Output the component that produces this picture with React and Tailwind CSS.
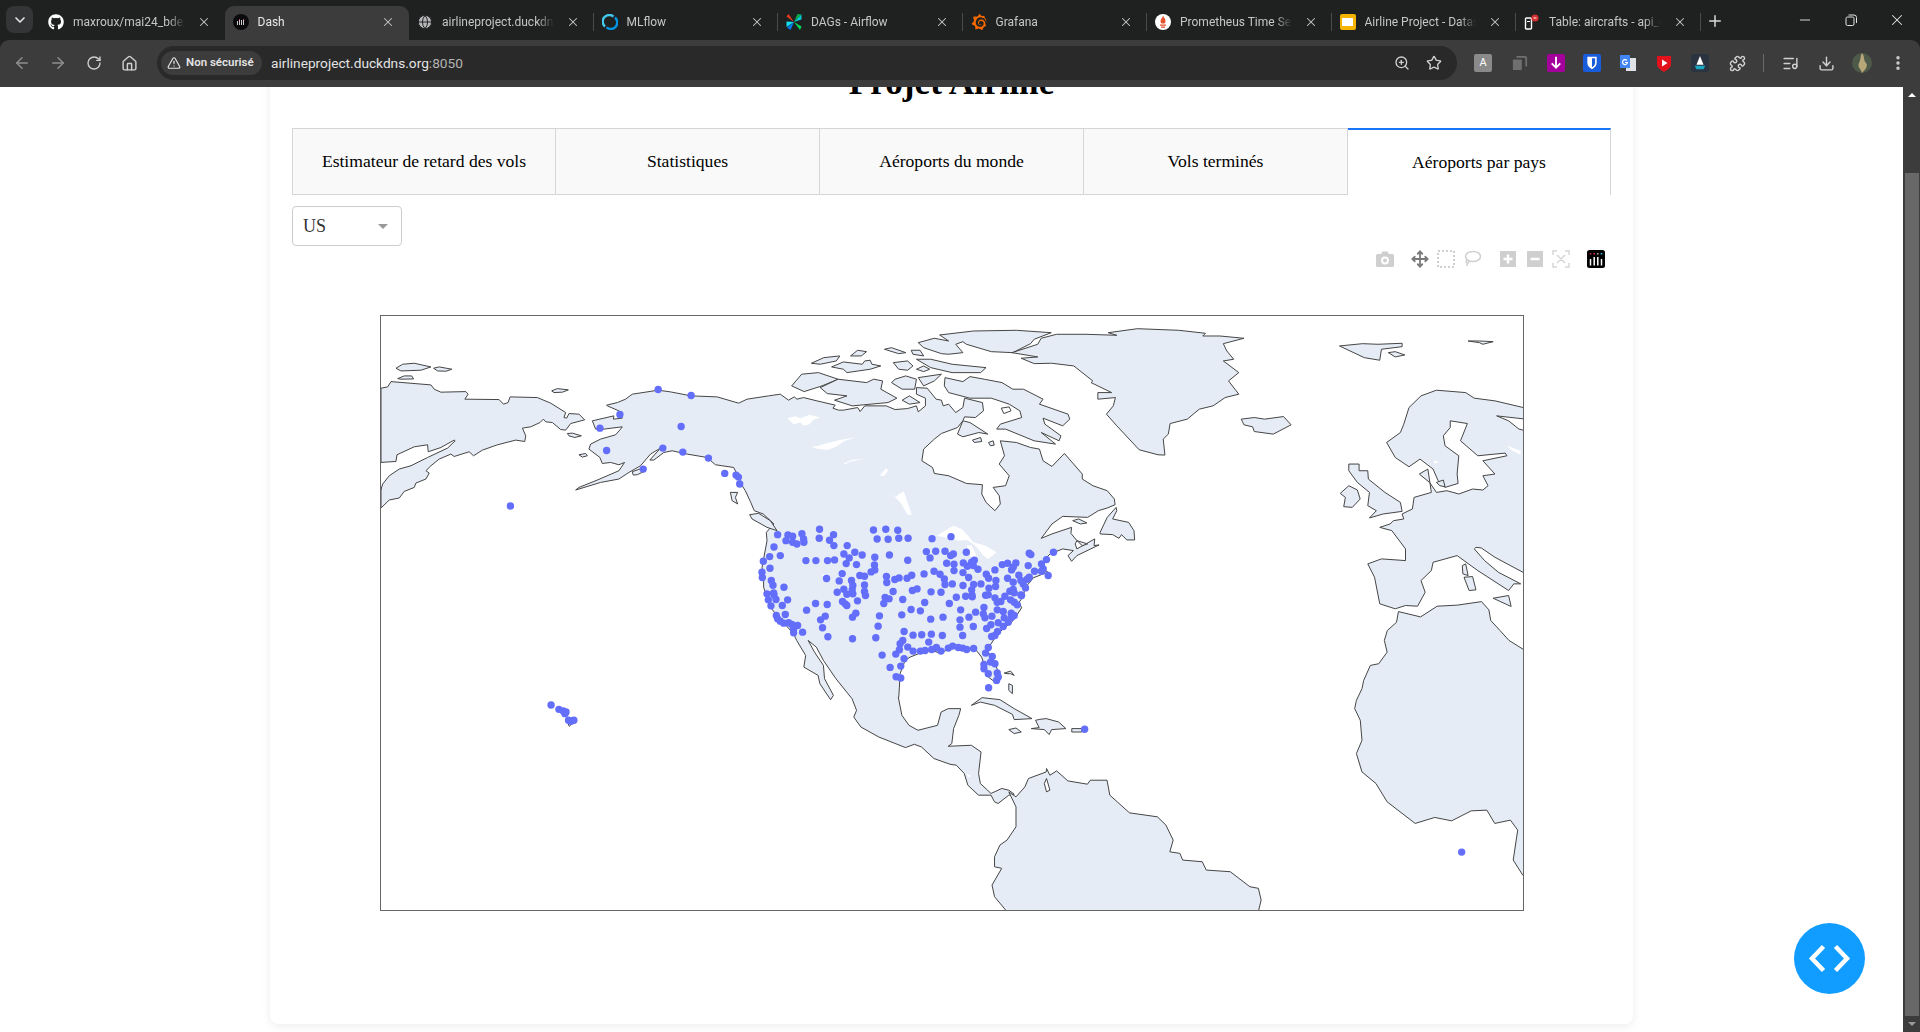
import React from 'react';
import {
  ArrowLeft, ArrowRight, RotateCw, House, TriangleAlert, ZoomIn, Star, Puzzle, ListMusic,
  Download, EllipsisVertical, ChevronDown, X, Plus, Minus, Move, Globe,
} from 'lucide-react';
import { FaGithub } from 'react-icons/fa';
import { SiGrafana } from 'react-icons/si';

// The crops were read at different scales, so every outline is written in the
// coordinates of its crop and converted to page pixels here.
const at = (ox, oy, sx, sy) => (s) =>
  s.trim().split(/\s+/).map((p) => {
    const [x, y] = p.split(',').map(Number);
    return [ox + x / sx, oy + y / sy];
  });
const z6 = at(370, 310, 3, 3);
const z7 = at(720, 310, 2.8, 3);
const z8 = at(740, 500, 3, 3);
const z9 = at(1000, 300, 2.904, 3);
const z10 = at(500, 640, 2.8, 3);
const z11 = at(1040, 640, 1.782, 3);
const z12 = at(1340, 70, 2.703, 2.8);

const northAmerica = [
  ...z6(`708,283 740,275 765,265 785,250 863,238 900,243 962,255 1040,258 1105,277 1130,265 1195,255 1230,250 1255,268 1272,258 1280,265 1300,260 1340,270 1395,283 1388,292 1405,298`),
  ...z7(`345,298 385,290 392,302 405,285 465,285 490,296 525,293 550,285 555,303 575,285 575,262 550,250 550,230 580,232 605,265 620,268 625,285 640,280 660,305 680,290 685,262 735,275 738,300 715,320 685,318 680,330 665,350 620,368 600,385 570,415 565,450 595,470 600,488 640,495 690,518 735,522 733,550 745,575 770,600 785,580 782,555 765,530 800,525 810,495 782,460 797,435 785,390 830,395 870,410 895,415 905,450 930,467 965,428 1015,490 1015,505 1045,525 1085,540 1105,565 1107,582 1085,592 1060,600 1030,620 960,617 930,640 900,683 930,670 985,650 983,668 1000,690 995,700 1000,715 1050,685 1048,705 1062,703 1000,735 985,752 975,735 990,720 960,715 925,730 910,745 905,775`),
  ...z8(`925,215 905,222 880,232 870,245 855,262 852,280 845,295 838,305 845,322 830,345 815,365 790,385 770,405 750,435 745,455 765,490 782,530 772,550 745,530 735,500 725,470 705,445 680,450 640,440 600,458 575,450 540,458 510,470 495,480 480,520 478,560 476,590`),
  ...z10(`1115,170 1125,225 1145,255 1170,270 1225,255 1235,215 1255,205 1290,205 1285,225 1270,265 1265,310 1255,318 1320,315 1347,335 1340,400 1345,430 1375,460 1405,445 1425,450 1440,462 1425,465 1395,490 1385,485 1375,465 1340,465 1310,435 1300,400 1278,375 1260,372 1215,355 1180,320 1160,312 1135,322 1060,290 1010,260 990,230 998,210 985,175 940,115 905,60 885,20 862,0 880,35 905,75 908,115 933,165 925,178 920,170 895,130 890,105 850,80 855,45 830,0`),
  ...z8(`160,400 110,345 90,320 70,260 70,230 65,200 80,120 78,95`),
  ...z7(`150,640 120,610 95,600 85,575 70,540 55,515`),
  ...z6(`1110,510 1090,470 1035,462 1010,440 950,430 905,420 880,425 850,448 838,448 870,412 840,430 810,465 775,485 745,505 690,515 615,538 625,530 680,508 745,480 762,455 745,462 720,455 695,458 688,440 655,415 660,400 690,385 735,372 750,355 755,348 700,355 675,355 665,330 730,315 728,325 755,322 745,300 710,285`),
];

const siberia = z6(`30,232 50,228 60,212 180,222 190,235 210,244 285,242 292,250 282,265 385,266 398,280 412,275 418,258 500,260 540,277 585,305 580,320 588,322 595,308 625,310 642,327 600,338 585,358 570,356 545,335 525,333 518,325 508,335 480,348 455,352 465,375 462,392 435,388 380,402 335,418 308,435 295,423 250,437 240,430 205,445 180,465 165,480 175,487 165,505 135,517 130,530 100,542 85,562 55,568 30,592`);
const okhotsk = z6(`28,455 75,452 78,432 130,408 170,402 172,423 210,410 250,388 253,390 230,412 170,440 120,465 85,475 55,495 35,520 28,542`);

const southAmerica = [
  ...z10(`1425,455 1445,470 1470,440 1480,415 1530,395`),
  ...z11(`12,385 18,405 30,392 50,422 85,432 90,420 120,420 125,465 160,518 210,530 225,555 238,600 232,635 250,640 255,660 290,665 297,690 340,695 375,740 390,745 395,780 390,815`),
  ...z10(`1420,815 1385,770 1378,735 1405,685 1385,680 1385,650 1400,615 1420,600 1445,560 1445,500`),
];

const africa = [
  ...z12(`160,1515 220,1530 265,1500 320,1497 385,1487 405,1510 410,1540 435,1568`),
  [1510, 640], [1526, 650], [1526, 875],
  ...z11(`862,705 845,660 853,570 840,540 812,550 798,510 770,512 735,542 705,532 670,550 620,485 600,430 575,395 565,340 575,300 572,240 562,205 565,180 575,145 578,120 590,75 605,70 620,35 615,0`),
  ...z12(`130,1568 155,1545`),
];

const europe = z9(`1530,322 1440,300 1380,292 1355,275 1270,268 1225,285 1190,320 1175,370 1165,395 1125,425 1150,470 1190,498 1222,475 1260,505 1275,540 1295,560 1333,548 1330,520 1335,465 1295,435 1290,405 1310,380 1310,360 1360,368 1340,420 1390,465 1470,457 1475,465 1405,480 1440,520 1405,525 1420,555 1405,568 1375,565 1335,580 1300,570 1270,575 1250,545 1220,520 1245,505 1255,575 1205,590 1200,625 1170,640 1175,655 1145,660 1135,670 1105,680 1140,690 1180,745 1180,780 1110,775 1070,790 1090,830 1105,910 1150,925 1180,915 1215,917 1237,875 1225,840 1255,810 1260,785 1330,765 1390,810 1480,870 1495,850 1515,850 1450,815 1410,780 1380,745 1385,740 1400,742 1440,770 1530,820`);

const islands = [
  z6(`75,172 95,160 130,157 180,168 150,178 90,180`),
  z6(`188,172 205,168 243,175 225,181 200,180`),
  z6(`80,203 100,195 122,195 128,204 90,205`),
  z6(`543,240 560,233 593,237 575,244 550,245`),
  z6(`590,368 605,367 632,375 612,380 595,375`),
  z6(`625,432 645,428 650,435 635,439`),
  z6(`785,483 815,472 825,480 800,492 788,493`),
  z6(`1080,545 1102,545 1095,560 1102,580 1085,570`),
  z6(`1138,612 1165,608 1200,630 1220,660 1190,650 1145,625`),
  // Canadian Arctic
  z7(`200,225 228,190 275,185 330,205 285,225 235,242`),
  z7(`280,230 330,205 410,215 430,205 455,210 450,235 495,262 470,275 370,285 320,268 355,255 300,248`),
  z7(`255,157 290,140 335,135 325,150 280,160`),
  z7(`312,168 345,153 398,160 405,150 420,148 425,160 450,165 420,175 355,185 345,175`),
  z7(`365,135 385,118 410,122 395,135`),
  z7(`460,115 480,110 520,125 500,128`),
  z7(`535,118 560,118 570,135 540,130`),
  z7(`485,155 525,150 540,165 525,178 500,175`),
  z7(`550,145 590,145 650,160 745,170 730,185 650,185 590,170`),
  z7(`550,175 570,165 587,175 570,182`),
  z7(`630,200 680,212 700,197 740,205 790,215 820,235 850,235 905,265 895,280 975,310 980,325 960,345 905,322 910,340 955,375 950,390 900,365 940,400 880,390 800,355 775,355 785,340 845,320 840,300 810,280 760,262 700,262 640,245 628,225`),
  z7(`555,95 600,82 640,90 615,72 710,60 830,58 928,65 880,85 870,98 820,125 760,122 690,100 680,92 660,100 680,125 640,130 620,128 570,110`),
  z7(`490,205 520,195 550,205 545,235 510,235 480,215`),
  z7(`555,200 620,190 600,210 570,225`),
  z7(`510,268 530,255 560,275 530,280`),
  z7(`680,330 700,335 750,370 725,365 680,378 665,370`),
  z7(`707,388 730,380 733,392 712,395`),
  z7(`752,395 765,390 768,403 757,405`),
  z7(`1065,665 1085,620 1110,590 1112,600 1100,625 1145,635 1160,660 1162,688 1140,688 1125,672 1118,683 1100,672 1065,670`),
  z7(`988,630 1005,625 1028,637 1010,640`),
  z7(`1000,690 1030,700 1015,705`),
  // Greenland, Iceland and the far north
  z9(`35,155 110,130 120,112 165,100 250,100 340,103 315,95 400,83 520,88 598,97 590,105 640,105 710,112 650,128 660,150 680,175 650,180 695,215 665,240 695,280 655,290 620,315 580,325 545,355 495,368 490,400 475,415 480,463 460,462 405,447 340,375 310,340 330,315 336,290 285,295 285,275 325,275 265,245 270,240 215,195 150,187 100,188 62,172 110,168`),
  z9(`702,355 740,350 770,355 825,347 847,372 795,400 740,392 735,378 710,372`),
  z9(`988,135 1055,128 1100,130 1170,127 1170,137 1110,145 1105,178 1060,170`),
  z9(`1130,155 1150,152 1178,162 1150,168`),
  z9(`1362,120 1395,120 1435,122 1405,130 1395,125`),
  // British Isles and the Mediterranean
  z9(`1015,490 1045,490 1045,510 1070,510 1072,535 1120,575 1165,605 1170,632 1115,640 1075,652 1095,630 1070,615 1075,575 1040,545 1015,510`),
  z9(`990,578 1015,555 1040,568 1048,595 1025,620 1000,618 1005,590`),
  z9(`1345,795 1355,790 1362,825 1347,820`),
  z9(`1350,830 1375,828 1385,868 1365,870`),
  z9(`1435,893 1480,885 1487,918`),
  z9(`1270,545 1290,538 1295,558 1280,555`),
  // Caribbean and Hawaii
  z10(`1320,195 1350,172 1400,178 1440,205 1490,235 1440,238 1435,222 1385,195 1345,185`),
  z10(`1488,265 1510,262 1500,240 1512,237 1530,235 1565,245 1585,265 1545,268 1538,283 1525,268`),
  z10(`1425,268 1445,263 1460,275 1440,280`),
  z10(`1412,98 1430,92 1440,105 1430,100 1420,100`),
  z10(`1425,130 1435,135 1435,160 1425,150`),
  z11(`57,265 75,265 75,275 57,275`),
  z10(`188,248 205,245 192,258`),
];

// White cut-outs with a coast line
const holes = [
  z9(`1445,345 1530,355 1530,390 1510,385 1480,360`),
  z7(`788,292 810,288 815,300 795,308`),
  z11(`12,415 18,450 12,455 8,430`),
];

// Lakes are drawn white, without a line
const lakes = [
  z7(`188,322 210,316 225,322 250,312 280,320 262,326 250,340 232,345 225,335 205,340`),
  z7(`255,408 275,405 295,398 335,388 378,380 345,392 325,408 300,418 275,415`),
  z7(`345,458 370,447 405,445 365,452 350,460`),
  z7(`447,495 465,472 470,480 460,495`),
  z7(`480,545 490,562 500,550 515,542 525,575 537,612 525,612 505,575 495,565`),
  z8(`590,105 612,92 640,75 665,85 685,105 700,125 735,135 770,155 745,175 730,165 715,145 700,130 680,118 655,120 625,112`),
  z8(`680,135 695,135 708,160 710,180 695,172`),
  z8(`780,180 815,175 790,195`),
  z8(`245,220 255,222 250,228`),
  z10(`1305,398 1320,408 1312,410`),
  z9(`1262,480 1278,482 1265,490`),
  z9(`1475,435 1515,450 1515,462 1490,450`),
];

const airports = [
  ...z6(`863,236 962,254 748,311 688,352 932,347 708,419 877,412 937,424 1014,442 818,475 1063,488 1097,493 1104,499 1108,520 419,586`),
  ...z8(`112,102 143,103 157,107 185,99 238,86 237,113 280,102 268,119 281,135 137,120 157,125 170,130 190,115 191,125 101,139 88,168 120,165 69,182 89,203 65,215 66,231 93,240 98,254 131,260 80,280 100,277 101,283 84,298 107,297 142,298 92,316 126,315 135,342 108,345 112,355 120,362 130,368 145,367 155,372 172,375 160,385 160,397 187,395 199,329 226,309 261,312 197,180 227,180 262,180 283,178 321,135 311,160 327,172 344,155 366,163 318,189 349,192 306,219 359,225 373,227 259,234 297,241 334,240 338,255 336,268 311,266 291,275 320,281 338,280 373,253 373,273 376,285 352,301 307,303 315,310 320,315 347,338 337,350 255,347 241,358 247,382 263,409 337,415 407,412 414,377 418,346 485,343 513,327 541,331 572,356 609,350 431,309 435,291 447,295 488,297 554,306 628,309 649,290 677,287 697,289 400,88 437,86 473,89 411,115 444,116 476,113 504,113 576,114 633,108 404,170 448,163 503,179 403,193 404,208 393,214 439,228 440,246 464,237 477,232 501,233 515,224 552,220 582,212 600,221 613,235 615,252 637,250 669,255 695,268 701,252 723,250 747,263 767,258 768,240 765,208 739,221 746,233 686,231 669,216 642,210 642,191 620,188 570,172 559,153 587,152 615,152 632,165 640,160 679,155 703,179 695,185 670,187 682,197 700,195 714,206 787,192 803,188 828,187 820,200 815,208 865,195 905,190 920,177 941,155 868,158 873,162 884,212 905,212 925,225 910,205 837,224 843,240 862,236 868,230 850,250 857,262 803,233 820,245 845,285 843,283 820,267 810,272 823,277 795,287 765,292 772,305 783,303 812,298 823,305 832,313 814,338 790,333 772,328 732,321 707,335 687,350 662,328 660,358 660,380 668,405 700,378 730,340 735,352 756,347 793,352 815,350 823,345 805,365 790,378 775,367 753,373 740,384 773,393 765,405 755,408 745,441 737,458 757,468 752,485 765,490 732,492 732,505 745,520 772,518 775,530 770,540 746,562 519,404 545,403 574,401 607,405 492,393 488,420 480,430 478,448 503,440 519,452 541,452 555,450 575,447 566,425 589,441 603,452 625,443 638,437 655,441 668,443 680,447 701,444 467,461 426,464 492,475 482,497 450,501 468,529 482,533 517,270 531,265 573,274 603,275 459,273 737,284 745,283 696,283`),
  ...z10(`141,194 163,207 175,212 183,215 180,220 190,240 205,240 197,243`),
  ...z11(`80,267 753,636`),
];

const toPoints = (pts) => pts.map(([x, y]) => `${x.toFixed(1)},${y.toFixed(1)}`).join(' ');

function WorldMap() {
  const land = [siberia, northAmerica, southAmerica, africa, europe, ...islands];
  return (
    <svg viewBox="380 315 1144 595" className="block w-full h-full">
      <g fill="#e5ecf6" stroke="#444444" strokeWidth="1" strokeLinejoin="round">
        {land.map((pts, i) => <polygon key={i} points={toPoints(pts)} />)}
      </g>
      <g fill="#ffffff" stroke="#444444" strokeWidth="1" strokeLinejoin="round">
        <polygon points={toPoints(okhotsk)} />
        {holes.map((pts, i) => <polygon key={i} points={toPoints(pts)} />)}
      </g>
      <g fill="#ffffff">
        {lakes.map((pts, i) => <polygon key={i} points={toPoints(pts)} />)}
      </g>
      <g fill="#636efa">
        {airports.map(([x, y], i) => <circle key={i} cx={x} cy={y} r="3.7" />)}
      </g>
    </svg>
  );
}

function DashIcon() {
  return (
    <svg viewBox="0 0 16 16" className="w-4 h-4">
      <circle cx="8" cy="8" r="8" fill="#0b0b0d" />
      <path d="M4.5 7v4M6.5 5v6M8.5 6v5M10.5 5v6" stroke="#c9c9c9" strokeWidth="1" />
      <path d="M6.5 5v1M10.5 5v1" stroke="#d8336b" strokeWidth="1" />
    </svg>
  );
}

function MlflowIcon() {
  return (
    <svg viewBox="0 0 16 16" className="w-4 h-4" fill="none">
      <path d="M3 12.5A6.3 6.3 0 0 1 11.5 2.6" stroke="#43c9ed" strokeWidth="2.4" />
      <path d="M13 3.5A6.3 6.3 0 0 1 4.5 13.4" stroke="#0194e2" strokeWidth="2.4" />
    </svg>
  );
}

function AirflowIcon() {
  return (
    <svg viewBox="0 0 16 16" className="w-4 h-4">
      <path d="M8 8 2.500 0 0.500 2.500z" fill="#e43921" />
      <path d="M8 8 15.500 0.500 11.500 0z" fill="#00ad46" />
      <path d="M8 8 15.500 0.500 15.500 5.500z" fill="#00c7d4" />
      <path d="M8 8 0.500 7.500 0.500 13z" fill="#11e1ee" />
      <path d="M8 8 1 13.500 4.500 16z" fill="#017cee" />
      <path d="M8 8 14 16 15.500 12.500z" fill="#04d659" />
    </svg>
  );
}

function PrometheusIcon() {
  return (
    <svg viewBox="0 0 16 16" className="w-4 h-4">
      <circle cx="8" cy="8" r="8" fill="#ffffff" />
      <path d="M8 1.500c.5 2 2.500 3 2.500 5.500 0 1-.5 2-1 2.500H6.500c-.5-.5-1-1.500-1-2.500C5.500 5 7.500 4 8 1.500z" fill="#e6522c" />
      <path d="M5 10.500h6v1.200H5zM6 12.500h4v1.200H6z" fill="#e6522c" />
    </svg>
  );
}

function SheetsIcon() {
  return (
    <div className="w-4 h-4 rounded-[2px] bg-[#f4b400] flex items-center justify-center">
      <div className="w-[11px] h-[8px] bg-white" />
    </div>
  );
}

function TableIcon() {
  return (
    <svg viewBox="0 0 16 16" className="w-4 h-4" fill="none">
      <rect x="1.500" y="4" width="6" height="11" rx="1" stroke="#ffffff" strokeWidth="1.400" />
      <path d="M3 7.500h3" stroke="#ffffff" />
      <circle cx="11" cy="4" r="3.600" fill="#d32f2f" />
      <path d="M9.500 4h3" stroke="#ffffff" />
    </svg>
  );
}

const browserTabs = [
  { title: 'maxroux/mai24_bde_airline', icon: <FaGithub className="w-4 h-4 text-white" /> },
  { title: 'Dash', icon: <DashIcon />, active: true },
  { title: 'airlineproject.duckdns.org', icon: <Globe className="w-4 h-4 text-[#202124] fill-[#b8b8b8]" strokeWidth={1.5} /> },
  { title: 'MLflow', icon: <MlflowIcon /> },
  { title: 'DAGs - Airflow', icon: <AirflowIcon /> },
  { title: 'Grafana', icon: <SiGrafana className="w-4 h-4 text-[#f46800]" /> },
  { title: 'Prometheus Time Series', icon: <PrometheusIcon /> },
  { title: 'Airline Project - Datasets', icon: <SheetsIcon /> },
  { title: 'Table: aircrafts - api_data', icon: <TableIcon /> },
];

function BrowserTab({ tab, showSeparator }) {
  return (
    <div className={`relative w-[184.5px] shrink-0 h-[34px] flex items-center pl-2 pr-[14px] pb-[2px] gap-[9px] rounded-t-[9px] ${tab.active ? 'bg-[#3c3c3c] text-[#e8e8e8]' : 'text-[#c4c7c5]'}`}>
      <div className="w-4 h-4 shrink-0 flex items-center justify-center">{tab.icon}</div>
      <span className="flex-1 min-w-0 whitespace-nowrap overflow-hidden text-[12px] [mask-image:linear-gradient(90deg,#000_85%,transparent)]">{tab.title}</span>
      <X className="w-[14px] h-[14px] shrink-0 ml-[3px] text-[#c7c7c7]" strokeWidth={1.8} />
      {showSeparator && <div className="absolute right-0 top-[7px] w-px h-[18px] bg-[#4a4a4a]" />}
    </div>
  );
}

function Extension({ className, children }) {
  return <div className={`w-[18px] h-[18px] rounded-[2px] flex items-center justify-center ${className}`}>{children}</div>;
}

function BrowserChrome() {
  return (
    <div className="relative h-[87px] shrink-0 bg-[#1f2121] font-['Roboto',sans-serif]">
      <div className="h-10 flex items-end">
        <div className="w-[40px] h-[34px] shrink-0 self-end flex items-start">
          <div className="ml-[6px] w-[27px] h-[27px] rounded-[8px] bg-[#333537] flex items-center justify-center">
            <ChevronDown className="w-4 h-4 text-[#e3e3e3]" strokeWidth={2.5} />
          </div>
        </div>
        {browserTabs.map((tab, i) => (
          <BrowserTab key={tab.title} tab={tab} showSeparator={i >= 2} />
        ))}
        <Plus className="w-[18px] h-[18px] ml-[5px] mb-[10px] text-[#d8d8d8]" strokeWidth={2} />
        <div className="ml-auto flex items-center h-10 text-[#e3e3e3]">
          <div className="w-[46px] flex justify-center"><Minus className="w-4 h-4" strokeWidth={1.4} /></div>
          <div className="w-[46px] flex justify-center">
            <svg viewBox="0 0 12 12" className="w-3 h-3" fill="none" stroke="#e3e3e3">
              <rect x="1" y="3" width="8" height="8.500" rx="1.500" />
              <path d="M3.500 1h5.500a2.500 2.500 0 0 1 2.500 2.500V9" />
            </svg>
          </div>
          <div className="w-[46px] flex justify-center"><X className="w-[18px] h-[18px]" strokeWidth={1.4} /></div>
        </div>
      </div>
      <div className="h-[47px] bg-[#3c3c3c] rounded-t-[9px] flex items-start pt-[6px]">
        <div className="w-[157px] h-[34px] shrink-0 flex items-center text-[#8e8e8e]">
          <ArrowLeft className="w-[18px] h-[18px] ml-[13px]" />
          <ArrowRight className="w-[18px] h-[18px] ml-[18px]" />
          <RotateCw className="w-[16px] h-[16px] ml-[19px] text-[#d0d0d0]" />
          <House className="w-[17px] h-[17px] ml-[19px] text-[#d0d0d0]" />
        </div>
        <div className="w-[1300px] h-[34px] rounded-full bg-[#292929] flex items-center pl-1 pr-[15px]">
          <div className="h-6 w-[101px] rounded-full bg-[#3c3c3c] flex items-center pl-[6px] text-[#e3e3e3]">
            <TriangleAlert className="w-[14px] h-[14px]" />
            <span className="ml-[5px] text-[11.5px] font-semibold whitespace-nowrap">Non sécurisé</span>
          </div>
          <span className="ml-[9px] text-[13.7px] text-[#e3e3e3]">airlineproject.duckdns.org<span className="text-[#b4b4b4]">:8050</span></span>
          <ZoomIn className="w-[16px] h-[16px] ml-auto text-[#d0d0d0]" />
          <Star className="w-[16px] h-[16px] ml-[16px] text-[#d0d0d0]" />
        </div>
        <div className="flex-1 h-[34px] flex items-center text-[#d0d0d0]">
          <Extension className="ml-[17px] bg-[#8a8a8a] text-white text-[11px]">A</Extension>
          <Extension className="ml-[19px]">
            <svg viewBox="0 0 18 18" className="w-4 h-4" fill="#6f6f6f"><rect x="1" y="5" width="10" height="12" rx="1" /><path d="M5 1h10a2 2 0 0 1 2 2v10h-2V3H5z" /></svg>
          </Extension>
          <Extension className="ml-[18px] bg-[#a4009b]">
            <svg viewBox="0 0 18 18" className="w-[14px] h-[14px]" fill="none" stroke="#ffffff" strokeWidth="2.4"><path d="M9 1v14M3.500 9.500 9 15l5.500-5.500" /></svg>
          </Extension>
          <Extension className="ml-[18px] bg-[#175ddc]">
            <svg viewBox="0 0 18 18" className="w-[14px] h-[14px]" fill="#ffffff"><path d="M3 1h12v8c0 4-3 6-6 8-3-2-6-4-6-8zM9 3v11.500c2-1.300 4-3 4-5.500V3z" /></svg>
          </Extension>
          <Extension className="ml-[18px]">
            <svg viewBox="0 0 18 18" className="w-[18px] h-[18px]">
              <rect x="7" y="4" width="10" height="13" fill="#dfe3e8" />
              <rect x="1" y="1" width="10" height="13" fill="#4285f4" />
              <path d="M8 6.500a2.500 2.500 0 1 0 .5 2H6" fill="none" stroke="#ffffff" strokeWidth="1.200" />
            </svg>
          </Extension>
          <Extension className="ml-[18px]">
            <svg viewBox="0 0 18 18" className="w-[18px] h-[18px]"><path d="M2 2h14v8c0 4-4 6-7 8-3-2-7-4-7-8z" fill="#e3111b" /><path d="M7 5.500 12.500 9 7 12.500z" fill="#ffffff" /></svg>
          </Extension>
          <Extension className="ml-[18px] bg-[#2b3340]">
            <svg viewBox="0 0 18 18" className="w-4 h-4"><path d="M9 1 13 11H5z" fill="#ffffff" /><path d="M3 12h12l-2 4H5z" fill="#18a8c4" /></svg>
          </Extension>
          <Puzzle className="w-[17px] h-[17px] ml-[20px]" />
          <div className="w-px h-[18px] bg-[#6a6a6a] ml-[17px]" />
          <ListMusic className="w-[17px] h-[17px] ml-[18px]" />
          <Download className="w-[17px] h-[17px] ml-[19px]" />
          <svg viewBox="0 0 20 20" className="w-5 h-5 ml-[17px]">
            <circle cx="10" cy="10" r="10" fill="#4d5a4a" />
            <path d="M10 0c3 3 1 7 4 10s-2 8-4 10c-1-4-5-6-3-10s1-7 3-10z" fill="#b7a678" />
          </svg>
          <EllipsisVertical className="w-[18px] h-[18px] ml-[17px]" strokeWidth={2.6} />
        </div>
      </div>
    </div>
  );
}

const appTabs = ['Estimateur de retard des vols', 'Statistiques', 'Aéroports du monde', 'Vols terminés'];

function Tabs() {
  return (
    <div className="flex h-[67px] text-[17.6px] leading-none text-black">
      {appTabs.map((label, i) => (
        <div key={label} className={`w-[264px] flex items-center justify-center bg-[#f9f9f9] border-y border-r border-[#d6d6d6] ${i === 0 ? 'border-l' : ''}`}>
          {label}
        </div>
      ))}
      <div className="flex-1 flex items-center justify-center bg-white border-t-2 border-t-[#1975fa] border-r border-r-[#d6d6d6]">
        Aéroports par pays
      </div>
    </div>
  );
}

function ModeBar() {
  return (
    <div className="flex items-center justify-end h-[26px] pr-[6px]">
      <svg viewBox="0 0 18 16" className="w-[18px] h-[16px]" fill="#cfcfcf" fillRule="evenodd">
        <path d="M1.500 3H5l1.500-2.500h5L13 3h3.500A1.500 1.500 0 0 1 18 4.500v10a1.500 1.500 0 0 1-1.500 1.500h-15A1.500 1.500 0 0 1 0 14.500v-10A1.500 1.500 0 0 1 1.500 3zM9 5.500a4 4 0 1 0 0 8 4 4 0 0 0 0-8zM9 7.500a2 2 0 1 1 0 4 2 2 0 0 1 0-4z" />
      </svg>
      <Move className="w-[18px] h-[18px] ml-[17px] text-[#7a7a7a]" strokeWidth={2.4} />
      <svg viewBox="0 0 18 18" className="w-[18px] h-[18px] ml-[8px]" fill="none">
        <rect x="1" y="1" width="16" height="16" stroke="#cfcfcf" strokeWidth="2" strokeDasharray="2 2" />
      </svg>
      <svg viewBox="0 0 18 18" className="w-[18px] h-[18px] ml-[8px]" fill="none" stroke="#cfcfcf" strokeWidth="1.500">
        <ellipse cx="10" cy="6.500" rx="7.500" ry="5" />
        <path d="M4 10c-1.500 1-1 3 .5 3s1.500-1.500.5-2M4.500 13l-.5 3" />
      </svg>
      <svg viewBox="0 0 16 16" className="w-4 h-4 ml-[19px]">
        <rect width="16" height="16" fill="#cfcfcf" />
        <path d="M8 3.500v9M3.500 8h9" stroke="#ffffff" strokeWidth="2.500" />
      </svg>
      <svg viewBox="0 0 16 16" className="w-4 h-4 ml-[11px]">
        <rect width="16" height="16" fill="#cfcfcf" />
        <path d="M3.500 8h9" stroke="#ffffff" strokeWidth="2.500" />
      </svg>
      <svg viewBox="0 0 18 18" className="w-[18px] h-[18px] ml-[9px]" fill="none" stroke="#d6d6d6" strokeWidth="1.500">
        <path d="M1 5V1h4M13 1h4v4M17 13v4h-4M5 17H1v-4M5 5l8 8M13 5l-8 8" />
      </svg>
      <svg viewBox="0 0 18 18" className="w-[18px] h-[18px] ml-[17px]">
        <rect width="18" height="18" rx="2.500" fill="#000000" />
        <path d="M3.500 9v6.500M7.200 7v8.500M10.800 7v8.500M14.500 9v6.500" stroke="#ffffff" strokeWidth="1.500" />
        <path d="M3.500 3v1.500M7.200 3v1.500" stroke="#e0115f" strokeWidth="1.500" />
        <path d="M10.800 3v1.500" stroke="#b0b0b0" strokeWidth="1.500" />
        <path d="M14.500 3v1.500" stroke="#19d3f3" strokeWidth="1.500" />
      </svg>
    </div>
  );
}

export default function App() {
  return (
    <div className="h-screen w-full overflow-hidden flex flex-col bg-white">
      <BrowserChrome />
      <div className="relative flex-1 flex overflow-hidden font-['Liberation_Serif',serif]">
        <div className="flex-1 min-w-0">
          <div className="relative w-[1363px] h-[957px] -mt-[20px] mx-auto bg-white rounded-b-lg shadow-[0_2px_10px_rgba(0,0,0,0.08)] px-[22px] pt-px">
            <h1 className="h-[60px] leading-[30px] text-[35.2px] font-bold text-center text-black">Projet Airline</h1>
            <Tabs />
            <div className="mt-[11px] w-[110px] h-10 border border-[#cccccc] rounded flex items-center justify-between pl-[10px] pr-[13px] text-[18px] text-[#333333]">
              <span>US</span>
              <span className="w-0 h-0 border-x-[5px] border-x-transparent border-t-[5px] border-t-[#999999]" />
            </div>
            <ModeBar />
            <div className="mt-[43px] ml-[88px] w-[1144px] h-[596px] border border-[#666666] overflow-hidden">
              <WorldMap />
            </div>
          </div>
        </div>
        <div className="w-[17px] shrink-0 bg-[#3c3c3c] flex flex-col items-center">
          <div className="h-[16px] flex items-center justify-center">
            <span className="w-0 h-0 border-x-[4px] border-x-transparent border-b-[4px] border-b-white" />
          </div>
          <div className="mt-[70px] flex-1 w-[14px] bg-[#686868]" />
          <div className="h-[16px] flex items-center justify-center">
            <span className="w-0 h-0 border-x-[4px] border-x-transparent border-t-[4px] border-t-[#9a9a9a]" />
          </div>
        </div>
        <div className="absolute left-[1794px] top-[836px] w-[71px] h-[71px] rounded-full bg-[#119dff] flex items-center justify-center">
          <svg viewBox="0 0 71 71" className="w-[71px] h-[71px]" fill="none" stroke="#ffffff" strokeWidth="4.500">
            <path d="M29.500 23.500 18 35.500l11.500 12M41.500 23.500 53 35.500l-11.500 12" />
          </svg>
        </div>
      </div>
    </div>
  );
}
